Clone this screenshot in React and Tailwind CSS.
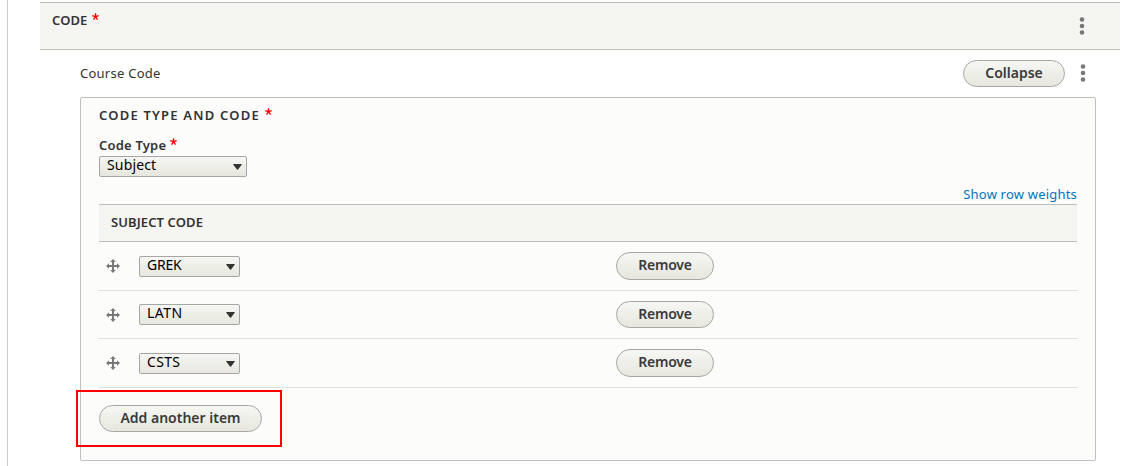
const buttonBase =
  "box-border flex items-center justify-center rounded-full border border-[#a6a6a6] bg-gradient-to-b from-[#f6f6f3] to-[#e7e7df] text-[14px] font-semibold text-[#3a3a3a] whitespace-nowrap";

function Required({ className = "" }) {
  return (
    <svg className={`shrink-0 ${className}`} width="7" height="7" viewBox="0 0 7 7" aria-hidden="true">
      <path d="M3.5 3.7V.2M3.5 3.7L.3 2.6M3.5 3.7l3.2-1.1M3.5 3.7L1.5 6.6M3.5 3.7l2 2.9" stroke="#f00" strokeWidth="1.35" fill="none" />
    </svg>
  );
}

function Dots({ className = "" }) {
  return (
    <svg className={`shrink-0 ${className}`} width="6" height="18" viewBox="0 0 6 18" fill="#787878">
      <circle cx="3" cy="2.5" r="2.3" />
      <circle cx="3" cy="9" r="2.3" />
      <circle cx="3" cy="15.5" r="2.3" />
    </svg>
  );
}

function MoveIcon({ className = "" }) {
  return (
    <svg className={`ml-[7px] shrink-0 ${className}`} width="14" height="14" viewBox="0 0 14 14" fill="#787878">
      <path d="M7 0l2.800 3H8v3h3V4.200L14 7l-3 2.800V8H8v3h1.800L7 14l-2.800-3H6V8H3v1.800L0 7l3-2.800V6h3V3H4.200z" />
    </svg>
  );
}

function Select({ children, className = "" }) {
  return (
    <div className={`box-border flex h-[21px] shrink-0 justify-between rounded-[2px] border border-[#a6a6a6] bg-gradient-to-b from-[#f6f6f3] to-[#e7e7df] pl-[7px] pr-[4px] text-[14px] leading-[16px] text-black ${className}`}>
      {children}
      <svg className="mt-[7px]" width="9" height="6" viewBox="0 0 9 6">
        <path d="M.7 0h7.600a.5.5 0 0 1 .4.8L5 5.500a.7.7 0 0 1-1 0L.3.800A.5.5 0 0 1 .7 0z" fill="#333" />
      </svg>
    </div>
  );
}

function Row({ heightClass, padClass, buttonHeight, label, spacing, iconClass }) {
  return (
    <div className={`box-border flex items-start border-b border-[#e0e0dc] ${heightClass}`}>
      <div className={`flex w-[517px] items-center ${padClass}`}>
        <MoveIcon className={iconClass} />
        <Select className="ml-[19px] w-[101px]">
          <span className={spacing}>{label}</span>
        </Select>
      </div>
      <div className="pt-[10px]">
        <button className={`${buttonBase} ${buttonHeight} w-[98px] tracking-[-0.2px]`}>Remove</button>
      </div>
    </div>
  );
}

export default function App() {
  return (
    <div className="h-[466px] w-[1137px] overflow-hidden bg-white pl-[7px] font-['Noto_Sans',sans-serif] text-[13px] text-[#333]">
      <div className="h-full border-l border-[#ccc] pl-8 pt-[2px]">
        <header className="box-border flex h-12 w-[1080px] items-start justify-between border-y border-[#bfbfba] bg-[#f5f5f2] pl-3 pr-[35px]">
          <h2 className="flex items-start pt-[8px] font-semibold leading-[18px]">
            <span className="w-9 tracking-[0.1px]">CODE</span>
            <Required className="ml-1 mt-[2px]" />
          </h2>
          <Dots className="mt-[14px]" />
        </header>
        <div className="ml-10 flex h-[47px] w-[1016px] items-start">
          <span className="grow pt-[14px] leading-[18px] tracking-[0.25px]">Course Code</span>
          <button className={`${buttonBase} mt-[10px] h-[27px] w-[102px] pb-[2px]`}>Collapse</button>
          <Dots className="ml-[15px] mr-[10px] mt-[14px]" />
        </div>
        <section className="ml-10 box-border h-[364px] w-[1016px] rounded-[2px] border border-[#bfbfbf] bg-[#fcfcfa] px-[18px]">
          <h3 className="flex h-[38px] items-start pt-[8px] font-semibold leading-[18px]">
            <span className="w-[161px] whitespace-nowrap tracking-[1.2px]">CODE TYPE AND CODE</span>
            <Required className="ml-[5px] mt-[2px]" />
          </h3>
          <label className="flex h-5 items-start font-semibold leading-[18px]">
            <span className="w-[67px] whitespace-nowrap tracking-[0.2px]">Code Type</span>
            <Required className="ml-1 mt-[2px]" />
          </label>
          <Select className="w-[148px]">
            <span className="tracking-[0.15px]">Subject</span>
          </Select>
          <div className="flex h-[27px] items-start justify-end pt-[8px] leading-[18px] text-[#0074bd]">
            <a className="tracking-[0.2px]">Show row weights</a>
          </div>
          <div className="box-border flex h-[38px] items-center border-y border-[#bfbfba] bg-[#f5f5f2] pb-[2px] pl-3 font-semibold leading-[18px]">
            <span className="tracking-[0.1px]">SUBJECT CODE</span>
          </div>
          <Row heightClass="h-[49px]" padClass="pt-[14px]" buttonHeight="h-7 pb-[3px]" label="GREK" spacing="tracking-[-0.2px]" iconClass="-mt-px" />
          <Row heightClass="h-[48px]" padClass="pt-[13px]" buttonHeight="h-[27px] pb-[2px]" label="LATN" spacing="tracking-[0.5px]" iconClass="mt-px" />
          <Row heightClass="h-[49px]" padClass="pt-[14px]" buttonHeight="h-7 pb-[3px]" label="CSTS" spacing="tracking-[0.3px]" iconClass="-mt-px" />
          <div className="relative pt-[17px]">
            <button className={`${buttonBase} h-[27px] w-[163px] pb-[2px]`}>Add another item</button>
            <div className="pointer-events-none absolute -left-[23px] top-[2px] box-border h-[57px] w-[206px] border-2 border-[#f00]" />
          </div>
        </section>
      </div>
    </div>
  );
}
